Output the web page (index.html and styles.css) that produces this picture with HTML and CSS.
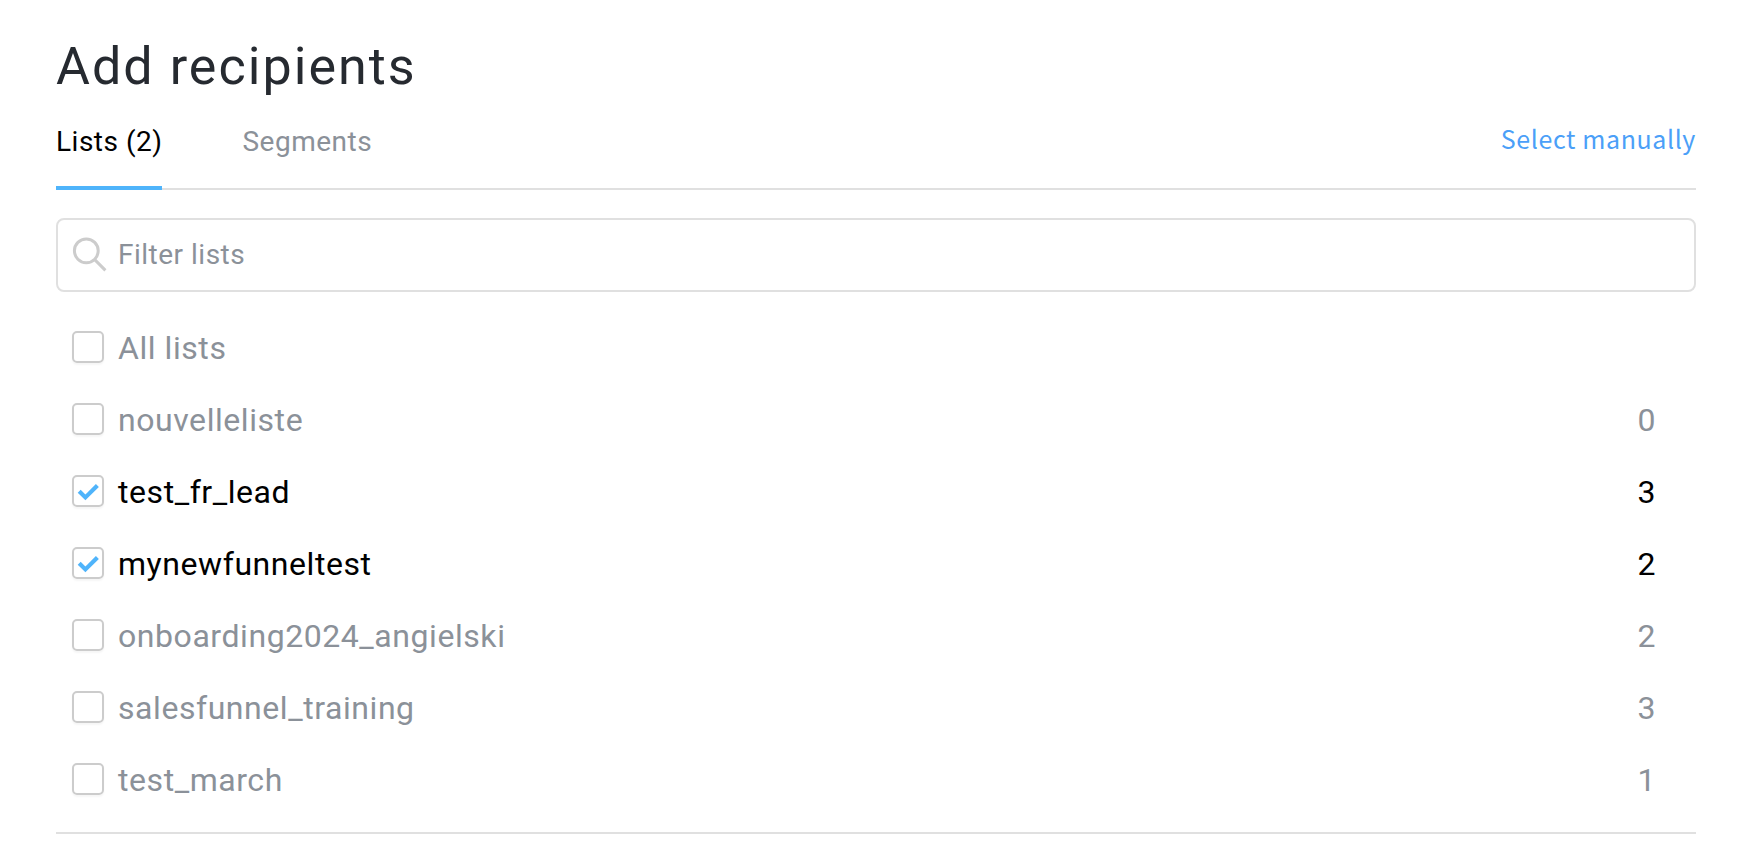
FILE: index.html
```html
<!DOCTYPE html>
<html lang="en">

<head>
    <meta charset="utf-8">
    <title>Add recipients</title>
    <meta name="viewport" content="width=device-width, initial-scale=1.0">
    <link rel="stylesheet" href="styles.css">
</head>

<body>
    <div class="recipients">
        <h1 class="title">Add recipients</h1>
        <div class="tabs">
            <a class="tab active">Lists (2)</a>
            <a class="tab">Segments</a>
            <a class="select-link">Select manually</a>
        </div>
        <div class="filter">
            <svg class="search-icon" width="36" height="36" viewBox="0 0 36 36">
                <circle cx="14.3" cy="13.8" r="11.9" />
                <path d="M22.7 22.6L33.4 33.4" />
            </svg>
            <input class="filter-input" type="text" placeholder="Filter lists">
        </div>
        <ul class="lists">
            <li class="list">
                <span class="checkbox"></span>
                <span class="name">All lists</span>
            </li>
            <li class="list">
                <span class="checkbox"></span>
                <span class="name">nouvelleliste</span>
                <span class="count">0</span>
            </li>
            <li class="list checked">
                <span class="checkbox"><svg width="28" height="28" viewBox="0 0 28 28"><path d="M5.2 14.2L11.4 20.4L23.4 8.6" /></svg></span>
                <span class="name">test_fr_lead</span>
                <span class="count">3</span>
            </li>
            <li class="list checked">
                <span class="checkbox"><svg width="28" height="28" viewBox="0 0 28 28"><path d="M5.2 14.2L11.4 20.4L23.4 8.6" /></svg></span>
                <span class="name">mynewfunneltest</span>
                <span class="count">2</span>
            </li>
            <li class="list">
                <span class="checkbox"></span>
                <span class="name">onboarding2024_angielski</span>
                <span class="count">2</span>
            </li>
            <li class="list">
                <span class="checkbox"></span>
                <span class="name">salesfunnel_training</span>
                <span class="count">3</span>
            </li>
            <li class="list">
                <span class="checkbox"></span>
                <span class="name">test_march</span>
                <span class="count">1</span>
            </li>
        </ul>
    </div>
</body>

</html>
```
FILE: styles.css
```css
html,
body {
    height: 100%;
    margin: 0;
    padding: 0;
    overflow: hidden;
    background-color: #fff;
}

* {
    box-sizing: border-box;
}

body {
    font-family: Roboto, sans-serif;
    color: #8b9199;
}

.recipients {
    padding: 37px 46px 0 56px;
}

.title {
    margin: 0;
    font-size: 52px;
    font-weight: 400;
    line-height: 60px;
    letter-spacing: 2.05px;
    color: #262a30;
}

.tabs {
    display: flex;
    gap: 80px;
    height: 93px;
    border-bottom: 2px solid #e0e0e0;
}

.tab {
    height: 93px;
    padding-top: 28px;
    font-size: 28px;
    line-height: 33px;
    letter-spacing: .5px;
}

.tab.active {
    color: #000;
    border-bottom: 4px solid #4fb4fb;
}

.select-link {
    margin-left: auto;
    padding-top: 22px;
    font-family: "Noto Sans CJK SC", sans-serif;
    font-size: 25px;
    line-height: 38px;
    letter-spacing: .6px;
    color: #4b9ff8;
}

.filter {
    display: flex;
    align-items: center;
    height: 74px;
    margin-top: 28px;
    padding-left: 14px;
    border: 2px solid #e0e0e0;
    border-radius: 8px;
}

.search-icon {
    fill: none;
    stroke: #ccc;
    stroke-width: 3;
}

.filter-input {
    flex: 1;
    padding: 0 0 2px 10px;
    border: 0;
    outline: 0;
    background: none;
    font-family: inherit;
    font-size: 28px;
    letter-spacing: .5px;
}

.filter-input::placeholder {
    color: #8b9199;
}

.lists {
    margin: 0;
    padding: 19px 40px 17px 16px;
    border-bottom: 2px solid #e0e0e0;
    list-style: none;
}

.list {
    display: flex;
    align-items: center;
    height: 72px;
    font-size: 32px;
    letter-spacing: .56px;
}

.list.checked {
    color: #000;
}

.checkbox {
    width: 32px;
    height: 32px;
    margin-right: 14px;
    border: 2px solid #ccc;
    border-radius: 5px;
    box-shadow: 0 2px 2px rgba(0, 0, 0, .04);
}

.checkbox svg {
    display: block;
    fill: none;
    stroke: #4fb4fb;
    stroke-width: 4.2;
}

.name {
    flex: 1;
    padding-top: 2px;
}

.count {
    padding-top: 2px;
}
```
